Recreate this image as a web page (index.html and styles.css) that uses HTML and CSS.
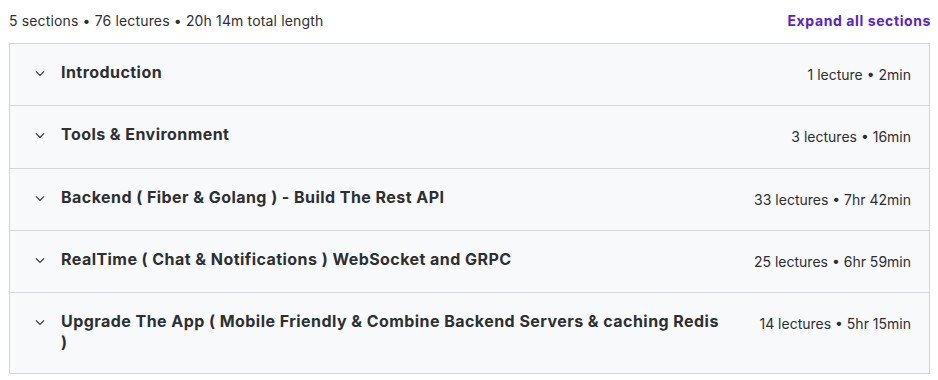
FILE: index.html
```html
<!DOCTYPE html>
<html>
<head>
<meta charset="utf-8">
<link rel="stylesheet" href="styles.css">
</head>
<body>
<div class="curriculum">
  <div class="summary">
    <span class="summary-text">5 sections • 76 lectures • 20h 14m total length</span>
    <button class="expand">Expand all sections</button>
  </div>
  <div class="sections">
    <div class="section">
      <svg class="chev" viewBox="0 0 24 24" width="16" height="16"><path d="M6 9.5 12 15.5l6-6" fill="none" stroke="#2d2f31" stroke-width="1.7"/></svg>
      <span class="title">Introduction</span>
      <span class="meta">1 lecture • 2min</span>
    </div>
    <div class="section">
      <svg class="chev" viewBox="0 0 24 24" width="16" height="16"><path d="M6 9.5 12 15.5l6-6" fill="none" stroke="#2d2f31" stroke-width="1.7"/></svg>
      <span class="title">Tools &amp; Environment</span>
      <span class="meta">3 lectures • 16min</span>
    </div>
    <div class="section">
      <svg class="chev" viewBox="0 0 24 24" width="16" height="16"><path d="M6 9.5 12 15.5l6-6" fill="none" stroke="#2d2f31" stroke-width="1.7"/></svg>
      <span class="title">Backend ( Fiber &amp; Golang ) - Build The Rest API</span>
      <span class="meta">33 lectures • 7hr 42min</span>
    </div>
    <div class="section">
      <svg class="chev" viewBox="0 0 24 24" width="16" height="16"><path d="M6 9.5 12 15.5l6-6" fill="none" stroke="#2d2f31" stroke-width="1.7"/></svg>
      <span class="title">RealTime ( Chat &amp; Notifications ) WebSocket and GRPC</span>
      <span class="meta">25 lectures • 6hr 59min</span>
    </div>
    <div class="section">
      <svg class="chev" viewBox="0 0 24 24" width="16" height="16"><path d="M6 9.5 12 15.5l6-6" fill="none" stroke="#2d2f31" stroke-width="1.7"/></svg>
      <span class="title">Upgrade The App ( Mobile Friendly &amp; Combine Backend Servers &amp; caching Redis )</span>
      <span class="meta">14 lectures • 5hr 15min</span>
    </div>
  </div>
</div>
</body>
</html>
```
FILE: styles.css
```css
* { box-sizing: border-box; }
html, body { margin: 0; padding: 0; background: #fff; }
body {
  font-family: Inter, "Noto Sans", "Liberation Sans", sans-serif;
  color: #2d2f31;
}
.curriculum { padding: 9px 7px 0 9px; }
.summary {
  display: flex;
  justify-content: space-between;
  align-items: center;
  height: 22px;
  margin-bottom: 12px;
}
.summary-text { font-size: 14px; color: #2d2f31; letter-spacing: 0.15px; }
.expand {
  border: 0;
  background: none;
  padding: 0;
  font-family: inherit;
  font-size: 14px;
  font-weight: 700;
  letter-spacing: 0.6px;
  color: #5624d0;
}
.sections {
  border: 1px solid #d1d7dc;
  background: #f7f9fa;
  margin-right: 1px;
}
.section {
  display: flex;
  align-items: flex-start;
  padding: 18px 18px 19px 22px;
  min-height: 62.3px;
  border-bottom: 1px solid #d1d7dc;
}
.section:last-child { border-bottom: 0; min-height: 79.5px; }
.chev { flex: none; margin-top: 3px; margin-right: 13px; }
.title {
  flex: 1;
  font-size: 16px;
  font-weight: 700;
  letter-spacing: 0.45px;
  line-height: 21px;
  padding-right: 36px;
}
.meta {
  flex: none;
  font-size: 14px;
  line-height: 21px;
  margin-top: 2px;
  color: #2d2f31;
}
```
